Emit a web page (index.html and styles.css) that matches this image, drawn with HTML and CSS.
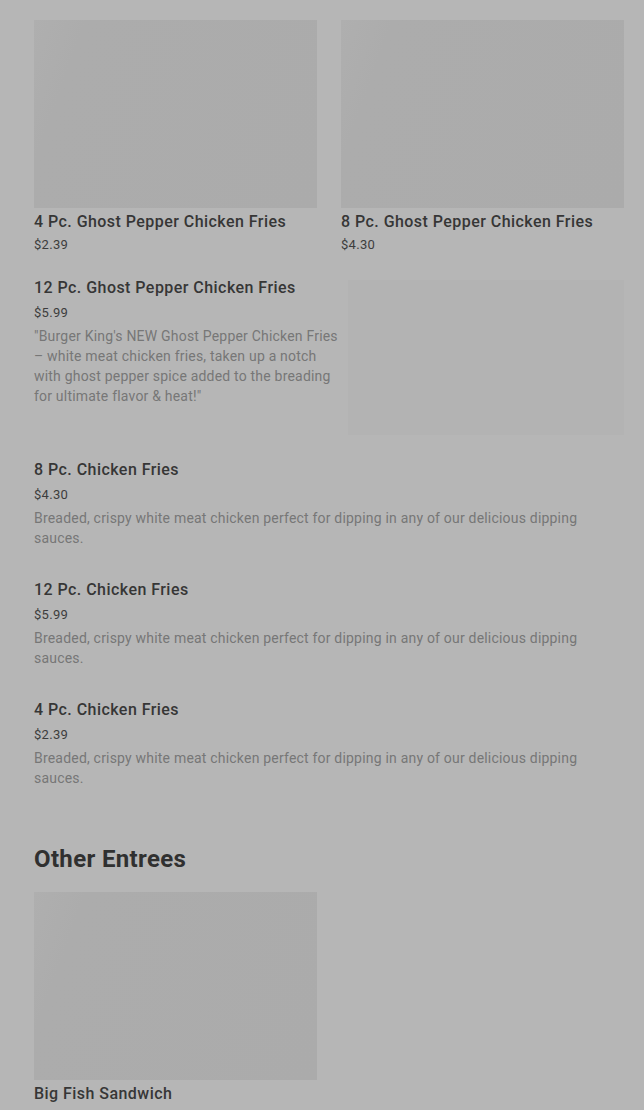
FILE: index.html
```html
<!DOCTYPE html>
<html>
<head>
<meta charset="utf-8">
<link rel="stylesheet" href="styles.css">
</head>
<body>
<main class="menu">
  <section class="grid">
    <div class="card">
      <div class="thumb"></div>
      <div class="title">4 Pc. Ghost Pepper Chicken Fries</div>
      <div class="price">$2.39</div>
    </div>
    <div class="card">
      <div class="thumb"></div>
      <div class="title">8 Pc. Ghost Pepper Chicken Fries</div>
      <div class="price">$4.30</div>
    </div>
  </section>

  <section class="item with-img">
    <div class="info">
      <div class="title">12 Pc. Ghost Pepper Chicken Fries</div>
      <div class="price gap">$5.99</div>
      <div class="desc">"Burger King's NEW Ghost Pepper Chicken Fries – white meat chicken fries, taken up a notch with ghost pepper spice added to the breading for ultimate flavor &amp; heat!"</div>
    </div>
    <div class="side-img"></div>
  </section>

  <section class="item">
    <div class="title">8 Pc. Chicken Fries</div>
    <div class="price gap">$4.30</div>
    <div class="desc">Breaded, crispy white meat chicken perfect for dipping in any of our delicious dipping sauces.</div>
  </section>

  <section class="item">
    <div class="title">12 Pc. Chicken Fries</div>
    <div class="price gap">$5.99</div>
    <div class="desc">Breaded, crispy white meat chicken perfect for dipping in any of our delicious dipping sauces.</div>
  </section>

  <section class="item">
    <div class="title">4 Pc. Chicken Fries</div>
    <div class="price gap">$2.39</div>
    <div class="desc">Breaded, crispy white meat chicken perfect for dipping in any of our delicious dipping sauces.</div>
  </section>

  <h2 class="heading">Other Entrees</h2>

  <section class="grid">
    <div class="card">
      <div class="thumb"></div>
      <div class="title">Big Fish Sandwich</div>
      <div class="price">$4.99</div>
    </div>
  </section>
</main>
</body>
</html>
```
FILE: styles.css
```css
html, body {
  margin: 0;
  padding: 0;
  background: #b6b6b6;
  font-family: Roboto, "Liberation Sans", sans-serif;
  overflow: hidden;
}
.menu {
  padding: 20px 20px 0 34px;
  width: 590px;
}
.grid {
  display: grid;
  grid-template-columns: 283px 283px;
  column-gap: 24px;
}
.thumb {
  height: 188px;
  background: linear-gradient(110deg, #afafaf 0%, #acacac 15%, #ababab 100%);
}
.title {
  font-size: 16px;
  line-height: 26px;
  font-weight: 500;
  color: #363636;
  letter-spacing: 0.45px;
}
.card .title {
  margin-top: 1px;
}
.price {
  font-size: 13px;
  line-height: 20px;
  color: #3d3d3d;
  letter-spacing: 0.3px;
}
.price.gap {
  line-height: 24px;
}
.desc {
  margin-top: 1px;
  max-width: 580px;
  font-size: 14px;
  line-height: 20px;
  color: #777777;
  letter-spacing: 0.2px;
}
.item {
  margin-top: 29px;
}
.with-img {
  display: flex;
  gap: 8px;
  margin-top: 20px;
}
.with-img .info {
  width: 306px;
  flex-shrink: 0;
}
.side-img {
  width: 276px;
  height: 155px;
  margin-top: 5px;
  background: #b3b3b3;
}
.with-img + .item {
  margin-top: 22px;
}
.heading {
  margin: 55px 0 17px;
  font-size: 24px;
  line-height: 32px;
  font-weight: 700;
  color: #303030;
  letter-spacing: 0.35px;
}
```
